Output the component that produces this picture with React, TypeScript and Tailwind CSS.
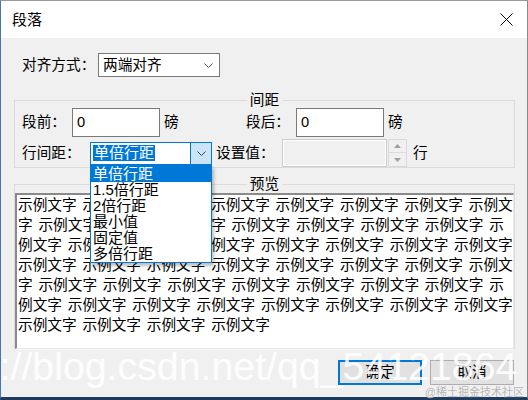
import React from "react";

const Chevron = ({ color = "#555" }: { color?: string }) => (
  <svg width="9" height="5" viewBox="0 0 9 5" className="block">
    <path d="M0.5 0.5 L4.5 4.5 L8.5 0.5" fill="none" stroke={color} strokeWidth="1" />
  </svg>
);

const TriUp = () => (
  <svg width="7" height="4" viewBox="0 0 7 4" className="block">
    <path d="M0 4 L3.5 0 L7 4 Z" fill="#a0a0a0" />
  </svg>
);
const TriDown = () => (
  <svg width="7" height="4" viewBox="0 0 7 4" className="block">
    <path d="M0 0 L3.5 4 L7 0 Z" fill="#a0a0a0" />
  </svg>
);

const lines = [
  "示例文字 示例文字 示例文字 示例文字 示例文字 示例文字 示例文字 示例文",
  "字 示例文字 示例文字 示例文字 示例文字 示例文字 示例文字 示例文字 示",
  "例文字 示例文字 示例文字 示例文字 示例文字 示例文字 示例文字 示例文字",
  "示例文字 示例文字 示例文字 示例文字 示例文字 示例文字 示例文字 示例文",
  "字 示例文字 示例文字 示例文字 示例文字 示例文字 示例文字 示例文字 示",
  "例文字 示例文字 示例文字 示例文字 示例文字 示例文字 示例文字 示例文字",
  "示例文字 示例文字 示例文字 示例文字",
];

const options = ["单倍行距", "1.5倍行距", "2倍行距", "最小值", "固定值", "多倍行距"];

export default function App() {
  return (
    <div className="relative w-[528px] h-[400px] overflow-hidden bg-[#f0f0f0] text-black font-['Liberation_Sans','Noto_Sans_CJK_SC',sans-serif] text-[14.67px]">
      <div className="flex flex-col h-full border-l border-l-[#3f78b8] border-r border-r-[#8a8a8a] border-t border-t-[#9a9a9a] border-b-[3px] border-b-[#1f3a5f]">
        {/* Title bar */}
        <div className="h-[37px] bg-white flex items-center justify-between pl-[11px] pr-[14px] shrink-0">
          <span className="text-[15px] leading-none">段落</span>
          <svg width="13" height="13" viewBox="0 0 13 13" className="block">
            <path d="M0.5 0.5 L12.5 12.5 M12.5 0.5 L0.5 12.5" stroke="#000" strokeWidth="1" />
          </svg>
        </div>

        {/* Body */}
        <div className="flex-1 flex flex-col">
          {/* Alignment row */}
          <div className="mt-[15px] pl-[21px] flex items-center h-[24px]">
            <span className="w-[76px] leading-none">对齐方式：</span>
            <div className="w-[122px] h-[24px] border border-[#7a7a7a] bg-white flex items-center justify-between pl-[4px] pr-[6px]">
              <span className="leading-none">两端对齐</span>
              <Chevron />
            </div>
          </div>

          {/* Spacing group */}
          <fieldset className="ml-[13px] mt-[15px] w-[501px] min-w-0 border border-[#dcdcdc] px-[7px] pb-0 m-0">
            <legend className="mx-auto px-[3px] leading-[16px] text-[14.67px]">间距</legend>
            <div className="flex items-center h-[29px]">
              <span className="w-[50px] leading-none">段前：</span>
              <div className="w-[88px] h-[29px] border border-[#7a7a7a] bg-white flex items-center pl-[4px]">
                <span className="leading-none">0</span>
              </div>
              <span className="ml-[4px] w-[82px] leading-none">磅</span>
              <span className="w-[50px] leading-none">段后：</span>
              <div className="w-[88px] h-[29px] border border-[#7a7a7a] bg-white flex items-center pl-[4px]">
                <span className="leading-none">0</span>
              </div>
              <span className="ml-[4px] leading-none">磅</span>
            </div>
            <div className="flex items-center h-[28px] mt-[2px]">
              <span className="w-[68px] leading-none">行间距：</span>
              <div className="relative w-[122px] h-[23px] border border-[#0078d7] bg-white flex items-center">
                <div className="flex-1 pl-[2px] flex items-center">
                  <span className="bg-[#0078d7] text-white text-[15px] leading-[16px] px-[1px]">单倍行距</span>
                </div>
                <div className="w-[21px] h-full bg-[#cce4f7] border-l border-l-[#0078d7] flex items-center justify-center">
                  <Chevron color="#444" />
                </div>
                {/* dropdown list */}
                <div className="absolute left-[-1px] top-[22px] w-[122px] bg-white border border-[#0078d7] shadow-[2px_3px_3px_rgba(0,0,0,0.25)] z-10">
                  {options.map((o, i) => (
                    <div
                      key={o}
                      className={
                        i === 0
                          ? "h-[16px] leading-[16px] pl-[2px] text-[15px] bg-[#0078d7] text-white"
                          : "h-[16px] leading-[16px] pl-[2px] text-[15px] text-black"
                      }
                    >
                      {o}
                    </div>
                  ))}
                </div>
              </div>
              <span className="ml-[4px] w-[66px] leading-none">设置值：</span>
              <div className="w-[105px] h-[28px] border border-[#cccccc] bg-[#f0f0f0] shadow-[inset_1px_1px_0_#ffffff,inset_-1px_-1px_0_#ffffff]" />
              <div className="ml-[1px] w-[19px] h-[28px] flex flex-col">
                <div className="h-[14px] border border-[#dadada] bg-[#f0f0f0] flex items-center justify-center">
                  <TriUp />
                </div>
                <div className="h-[14px] border border-[#dadada] border-t-0 bg-[#f0f0f0] flex items-center justify-center">
                  <TriDown />
                </div>
              </div>
              <span className="ml-[6px] leading-none">行</span>
            </div>
          </fieldset>

          {/* Preview group */}
          <fieldset className="ml-[13px] mt-[8px] w-[501px] min-w-0 border border-[#dcdcdc] border-b-[#f6f6f6] p-0 m-0">
            <legend className="mx-auto px-[3px] leading-[16px] text-[14.67px]">预览</legend>
            <div className="mt-[1px] h-[156px] bg-white border-t-2 border-l-2 border-t-[#8a8a8a] border-l-[#8a8a8a] border-r border-b border-r-[#e8e8e8] border-b-[#e8e8e8] pl-[1px]">
              {lines.map((l, i) => (
                <div key={i} className="whitespace-pre leading-[20px] text-[14.67px] [word-spacing:1.7px]">
                  {l}
                </div>
              ))}
            </div>
          </fieldset>

          {/* Buttons */}
          <div className="mt-[10px] flex justify-end gap-[8px] pr-[13px]">
            <div className="w-[84px] h-[25px] border-2 border-[#0078d7] bg-[#e1e1e1] flex items-center justify-center">
              <span className="leading-none">确定</span>
            </div>
            <div className="w-[84px] h-[25px] border border-[#adadad] bg-[#e1e1e1] flex items-center justify-center">
              <span className="leading-none">取消</span>
            </div>
          </div>
        </div>
      </div>

      {/* Watermarks */}
      <div className="absolute left-[-66px] top-[347px] text-[39.3px] leading-none text-white/85 whitespace-nowrap pointer-events-none font-['Liberation_Sans',sans-serif]">
        http://blog.csdn.net/qq_54121864
      </div>
      <div className="absolute right-[4px] top-[387px] text-[11px] leading-[11px] text-[#b4b4b4] whitespace-nowrap pointer-events-none [text-shadow:0_0_1px_#ffffff]">
        @稀土掘金技术社区
      </div>
    </div>
  );
}
